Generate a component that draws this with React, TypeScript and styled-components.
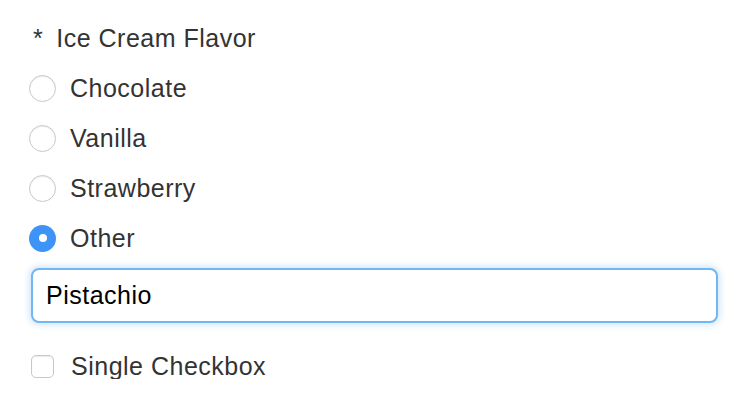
import React, { useState } from 'react';
import styled, { createGlobalStyle } from 'styled-components';

const GlobalStyle = createGlobalStyle`
  html, body {
    margin: 0;
    padding: 0;
    background: #ffffff;
  }
  body {
    font-family: 'Liberation Sans', Arial, sans-serif;
    color: #333333;
  }
`

const flavors = ['Chocolate', 'Vanilla', 'Strawberry', 'Other'];

const App = () => {
  const [flavor, setFlavor] = useState('Other');
  const [other, setOther] = useState('Pistachio');
  const [single, setSingle] = useState(false);
  return (
    <>
      <GlobalStyle />
      <Form>
        <Legend>
          <Required>*</Required>
          Ice Cream Flavor
        </Legend>
        {flavors.map(f => (
          <OptionRow key={f} onClick={() => setFlavor(f)}>
            <Radio checked={flavor === f} />
            <OptionLabel>{f}</OptionLabel>
          </OptionRow>
        ))}
        <OtherInput value={other} onChange={e => setOther(e.target.value)} />
        <CheckRow onClick={() => setSingle(!single)}>
          <Checkbox checked={single} />
          <OptionLabel>Single Checkbox</OptionLabel>
        </CheckRow>
      </Form>
    </>
  )
}

const Form = styled.div`
  display: flex;
  flex-direction: column;
  padding: 13px 31px 0 31px;
  box-sizing: border-box;
  width: 750px;
`
const Legend = styled.div`
  display: flex;
  align-items: center;
  height: 50px;
  font-size: 25px;
  letter-spacing: 0.5px;
  color: #333333;
`
const Required = styled.span`
  margin-left: 2px;
  margin-right: 13px;
`
const OptionRow = styled.label`
  display: flex;
  align-items: center;
  height: 50px;
  cursor: pointer;
`
const Radio = styled.span<{ checked: boolean }>`
  width: 27px;
  height: 27px;
  margin-left: -2px;
  border-radius: 50%;
  box-sizing: border-box;
  display: flex;
  align-items: center;
  justify-content: center;
  background: ${p => (p.checked ? '#3d94f6' : '#ffffff')};
  border: ${p => (p.checked ? 'none' : '1.5px solid #c8c8c8')};
  box-shadow: ${p => (p.checked ? 'none' : 'inset 0 1px 1px rgba(0,0,0,0.08)')};
  &::after {
    content: '';
    display: ${p => (p.checked ? 'block' : 'none')};
    width: 8px;
    height: 8px;
    border-radius: 50%;
    background: #ffffff;
  }
`
const OptionLabel = styled.span`
  margin-left: 14px;
  font-size: 25px;
  letter-spacing: 0.5px;
  color: #333333;
`
const OtherInput = styled.input`
  margin-top: 5px;
  width: 687px;
  height: 55px;
  box-sizing: border-box;
  border: 2px solid #72b6f2;
  border-radius: 8px;
  box-shadow: 0 0 6px 2px rgba(114, 182, 242, 0.35);
  padding: 0 13px;
  font-family: 'Liberation Sans', Arial, sans-serif;
  font-size: 25px;
  letter-spacing: 0.5px;
  color: #000000;
  outline: none;
  background: #ffffff;
`
const CheckRow = styled.label`
  display: flex;
  align-items: center;
  height: 26px;
  margin-top: 30px;
  cursor: pointer;
`
const Checkbox = styled.span<{ checked: boolean }>`
  width: 23px;
  height: 23px;
  box-sizing: border-box;
  border: 1.5px solid #c8c8c8;
  border-radius: 5px;
  background: ${p => (p.checked ? '#3d94f6' : '#ffffff')};
  box-shadow: inset 0 1px 1px rgba(0,0,0,0.08);
  margin-right: 3px;
`

export default App
